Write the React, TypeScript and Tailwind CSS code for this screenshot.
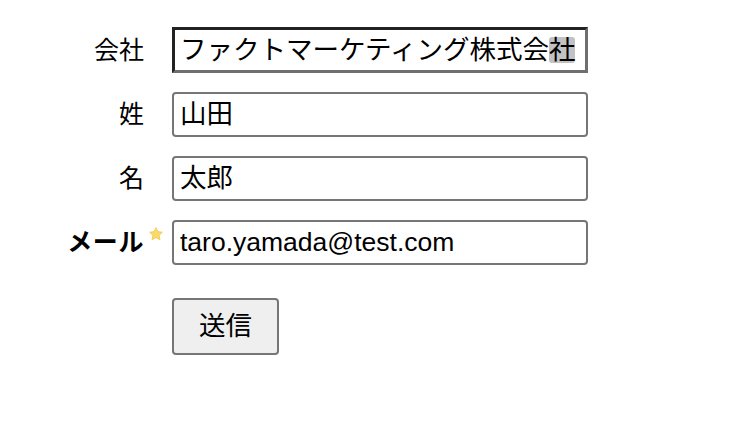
import React from "react";

const font = { fontFamily: '"Liberation Sans", "Noto Sans CJK JP", sans-serif' };

function Label({ children, bold, star }: { children: React.ReactNode; bold?: boolean; star?: boolean }) {
  return (
    <div className="relative flex items-center justify-end pr-[28px]">
      <span className={`text-[25px] leading-none text-black ${bold ? "font-bold tracking-[0.6px]" : ""}`}>{children}</span>
      {star && (
        <svg className="absolute right-[8px] top-[6px] blur-[0.5px]" width="16" height="16" viewBox="0 0 24 24">
          <path
            d="M12 2.5l2.9 6 6.6.9-4.8 4.6 1.2 6.5L12 17.4l-5.9 3.1 1.2-6.5L2.5 9.4l6.6-.9z"
            fill="#f8d96e"
            stroke="#f4cd55"
            strokeWidth="1.5"
            strokeLinejoin="round"
          />
        </svg>
      )}
    </div>
  );
}

function Field({ value }: { value: string }) {
  return (
    <div className="h-[45px] w-[416px] rounded-[4px] border-2 border-[#767676] bg-white flex items-center pl-[6px] text-[26.5px] leading-none text-black overflow-hidden whitespace-nowrap">
      {value}
    </div>
  );
}

export default function App() {
  return (
    <div className="w-[750px] h-[442px] bg-white" style={font}>
      <div className="pt-[27px] grid grid-cols-[172px_416px] gap-y-[19px]">
        <Label>会社</Label>
        <div className="h-[46px] w-[416px] border-[3px] border-t-[#222222] border-l-[#222222] border-b-[#6f6f6f] border-r-[#6f6f6f] bg-white flex items-center pl-[5px] text-[26.5px] leading-none text-black overflow-hidden whitespace-nowrap">
          ファクトマーケティング株式会
          <span className="bg-[#c2c2c2] rounded-[3px]">社</span>
        </div>

        <Label>姓</Label>
        <Field value="山田" />

        <Label>名</Label>
        <Field value="太郎" />

        <Label bold star>
          メール
        </Label>
        <Field value="taro.yamada@test.com" />

        <div />
        <div className="pt-[14px]">
          <button className="h-[57px] w-[107px] rounded-[4px] border-2 border-[#767676] bg-[#efefef] text-[26.5px] leading-none text-black flex items-center justify-center">
            送信
          </button>
        </div>
      </div>
    </div>
  );
}
